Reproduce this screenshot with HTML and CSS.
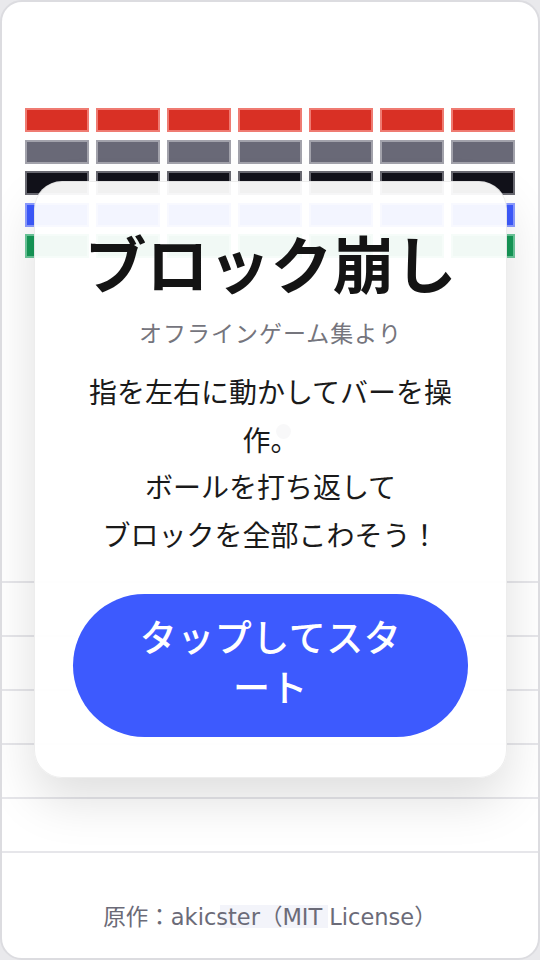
FILE: index.html
```html
<!DOCTYPE html>
<html lang="ja">
<head>
    <meta charset="UTF-8">
    <meta name="viewport" content="width=device-width, initial-scale=1.0">
    <title>ブロック崩し</title>
    <link rel="stylesheet" href="styles.css">
</head>
<body>
    <div class="frame">
        <div class="bricks">
            <div class="brick red"></div><div class="brick red"></div><div class="brick red"></div><div class="brick red"></div><div class="brick red"></div><div class="brick red"></div><div class="brick red"></div>
            <div class="brick gray"></div><div class="brick gray"></div><div class="brick gray"></div><div class="brick gray"></div><div class="brick gray"></div><div class="brick gray"></div><div class="brick gray"></div>
            <div class="brick black"></div><div class="brick black"></div><div class="brick black"></div><div class="brick black"></div><div class="brick black"></div><div class="brick black"></div><div class="brick black"></div>
            <div class="brick blue"></div><div class="brick blue"></div><div class="brick blue"></div><div class="brick blue"></div><div class="brick blue"></div><div class="brick blue"></div><div class="brick blue"></div>
            <div class="brick green"></div><div class="brick green"></div><div class="brick green"></div><div class="brick green"></div><div class="brick green"></div><div class="brick green"></div><div class="brick green"></div>
        </div>

        <div class="lanes">
            <div class="lane"></div>
            <div class="lane"></div>
            <div class="lane"></div>
            <div class="lane"></div>
            <div class="lane"></div>
        </div>

        <div class="ball"></div>
        <div class="paddle"></div>

        <footer class="credit">原作：akicster（MIT License）</footer>

        <div class="card">
            <h1 class="title">ブロック崩し</h1>
            <p class="subtitle">オフラインゲーム集より</p>
            <p class="howto">指を左右に動かしてバーを操作。<br>ボールを打ち返して<br>ブロックを全部こわそう！</p>
            <button class="start">タップしてスタート</button>
        </div>
    </div>
</body>
</html>
```

FILE: styles.css
```css
html {
  background: #e9e9ec;
}

body {
  margin: 0;
  font-family: "DejaVu Sans", "Noto Sans CJK JP", sans-serif;
}

.frame {
  position: relative;
  width: 540px;
  height: 960px;
  box-sizing: border-box;
  border: 2px solid #dcdce0;
  border-radius: 22px;
  background: #fff;
  overflow: hidden;
}

/* bricks */
.bricks {
  display: grid;
  grid-template-columns: repeat(7, 64px);
  grid-auto-rows: 24px;
  column-gap: 7px;
  row-gap: 7.5px;
  margin: 106px 0 0 23px;
}

.brick {
  box-sizing: border-box;
  border: 2px solid;
}

.red { background: #d93025; border-color: #ef7b72; }
.gray { background: #696977; border-color: #a2a2ab; }
.black { background: #12121a; border-color: #6a6a72; }
.blue { background: #3d5afe; border-color: #8c9cff; }
.green { background: #169a58; border-color: #6cc89b; }

/* background lanes */
.lanes {
  margin-top: 323px;
  border-bottom: 2px solid #e6e6ea;
}

.lane {
  height: 52px;
  border-top: 2px solid #e6e6ea;
}

.ball {
  position: absolute;
  left: 274px;
  top: 422px;
  width: 15px;
  height: 15px;
  border-radius: 50%;
  background: #8a8a96;
}

.paddle {
  position: absolute;
  left: 218px;
  top: 903px;
  width: 108px;
  height: 23px;
  background: #f3f4fa;
}

.credit {
  position: relative;
  margin-top: 49px;
  text-align: center;
  font-size: 22.5px;
  line-height: 30px;
  color: #6b6b78;
}

/* start overlay */
.card {
  position: absolute;
  left: 32px;
  top: 179px;
  width: 473px;
  height: 597px;
  box-sizing: border-box;
  padding: 50px 30px 40px;
  display: flex;
  flex-direction: column;
  align-items: center;
  background: rgba(255, 255, 255, 0.94);
  border: 1px solid rgba(0, 0, 0, 0.07);
  border-radius: 28px;
  box-shadow: 0 22px 50px rgba(0, 0, 0, 0.13);
}

.title {
  margin: 0;
  font-size: 62px;
  line-height: 72px;
  font-weight: 700;
  color: #141414;
}

.subtitle {
  margin: 14px 0 0;
  font-size: 23px;
  line-height: 32px;
  letter-spacing: 1px;
  color: #75757d;
}

.howto {
  margin: 20px 0 0;
  max-width: 380px;
  text-align: center;
  font-size: 28px;
  line-height: 47.7px;
  color: #1a1a1a;
}

.start {
  margin-top: 33px;
  width: 395px;
  height: 144px;
  padding: 0 58px;
  border: none;
  border-radius: 72px;
  background: #3d5afe;
  color: #fff;
  font-family: inherit;
  font-size: 37px;
  line-height: 50px;
  font-weight: 500;
  letter-spacing: 0.5px;
  cursor: pointer;
}
```
